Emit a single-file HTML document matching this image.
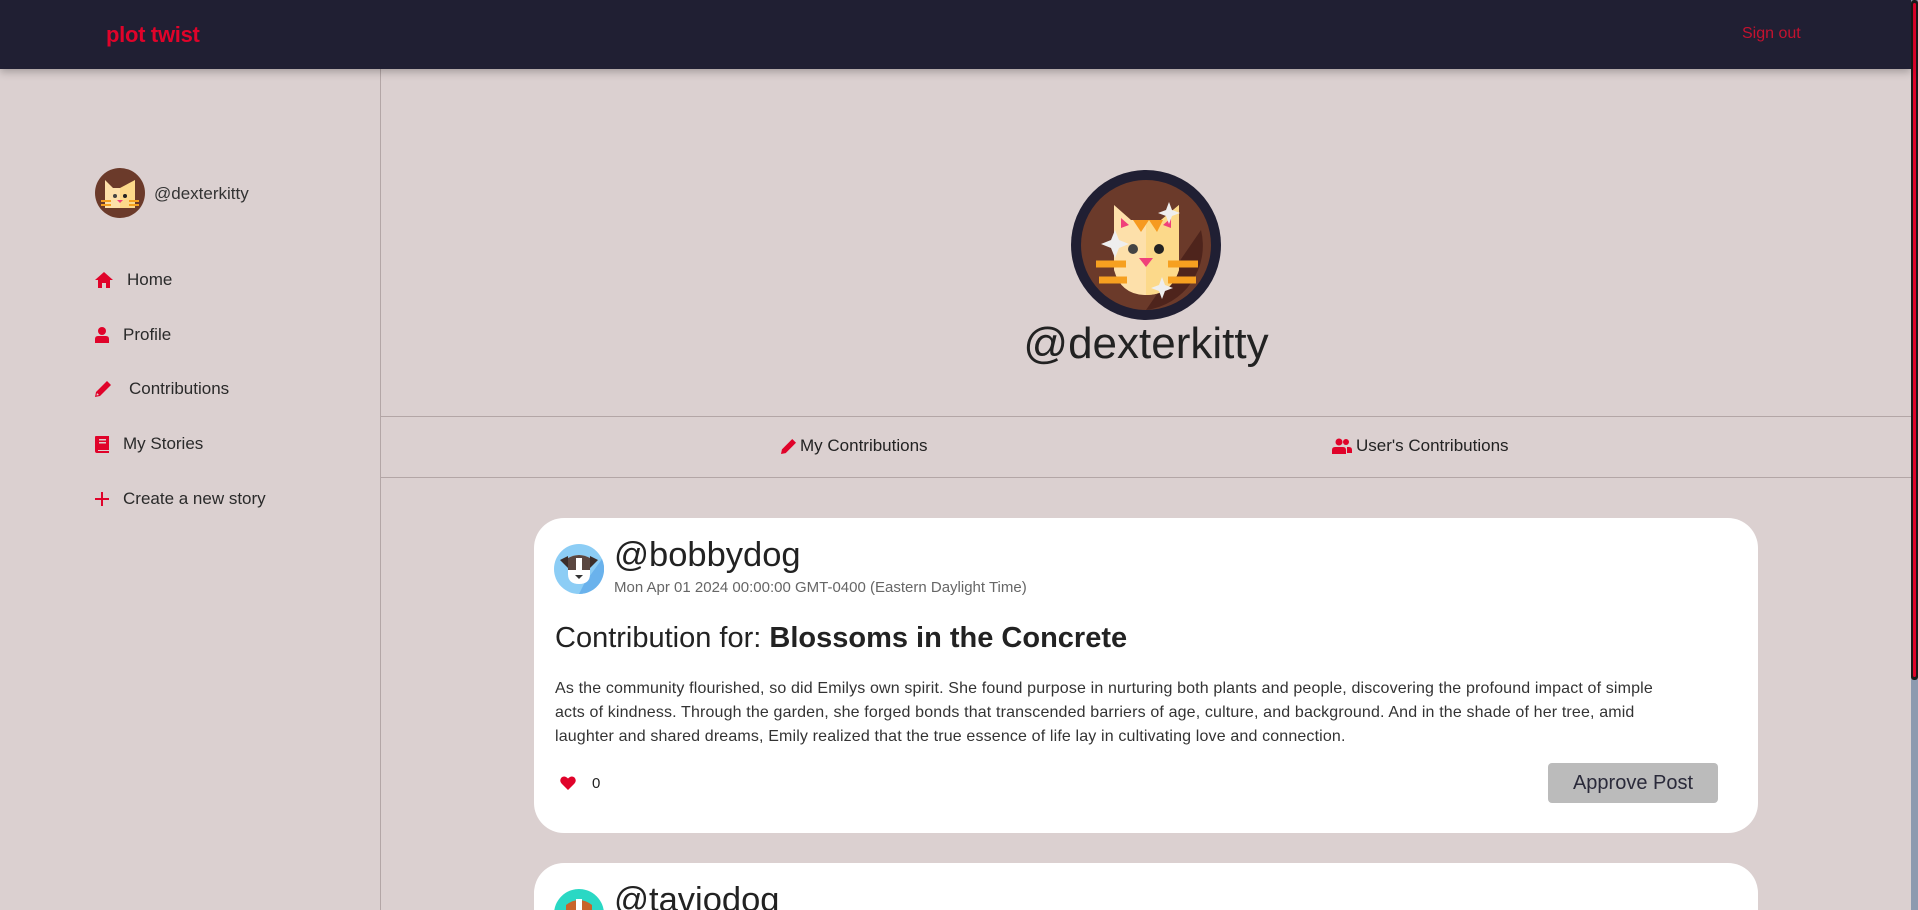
<!DOCTYPE html>
<html style="width:1918px;height:910px;overflow:hidden"><head><meta charset="utf-8"><style>
*{margin:0;padding:0;box-sizing:border-box}
body{width:1918px;height:910px;overflow:hidden;background:#dbd0d0;font-family:"Liberation Sans",sans-serif;color:#222;position:relative}
.hdr{position:absolute;left:0;top:0;width:1911px;height:69px;background:#201f33;box-shadow:0 3px 8px rgba(0,0,0,.25);z-index:2}
.logo{position:absolute;left:106px;top:22px;color:#e0032a;font-weight:bold;font-size:22px;letter-spacing:-0.3px}
.so{position:absolute;left:1742px;top:25px;color:#c4122f;font-size:16px}
.side{position:absolute;left:0;top:69px;width:381px;height:841px;border-right:1px solid #b3a6a6}
.nav{position:absolute;left:95px;font-size:17px;color:#2a2a2a;display:flex;align-items:center}
.nav svg{fill:#e0032a}
.ln{position:absolute;left:381px;width:1530px;height:1px;background:#b3a6a6}
.tab{position:absolute;top:436px;font-size:17px;color:#222;display:flex;align-items:center;gap:4px}
.card{position:absolute;left:534px;width:1224px;background:#fff;border-radius:30px;overflow:hidden}
.sb{position:absolute;left:1911px;top:0;width:7px;height:910px;background:#8e9aaf}
.sbt{position:absolute;left:1911px;top:0;width:7px;height:680px;background:#1a1a1a;border-radius:3px}
.sbt::after{content:"";position:absolute;left:2px;top:3px;width:3px;height:674px;background:#e0032a;border-radius:2px}
</style></head><body>
<div class="hdr"><div class="logo">plot twist</div><div class="so">Sign out</div></div>
<div class="side">
 <svg style="position:absolute;left:95px;top:99px" width="50" height="50" viewBox="0 0 50 50"><circle cx="25" cy="25" r="25" fill="#6b3a2a"/><path d="M10 12 L18 20 L32 20 L40 12 L40 40 L10 40Z" fill="#fde0aa"/><path d="M25 20 L40 12 L40 40 L25 40Z" fill="#fcd98a"/><circle cx="20" cy="28" r="2" fill="#444"/><circle cx="30" cy="28" r="2" fill="#222"/><path d="M22 32 h6 l-3 3z" fill="#f0407a"/><path d="M6 33h10M6 37h10M34 33h10M34 37h10" stroke="#f6a020" stroke-width="2"/></svg>
 <div style="position:absolute;left:154px;top:115px;font-size:17px;color:#333">@dexterkitty</div>
 <div class="nav" style="top:201px"><svg width="18" height="16" viewBox="0 0 18 16"><path d="M9 0 L18 8 H15 V16 H11 V11 H7 V16 H3 V8 H0Z"/></svg><span style="margin-left:14px">Home</span></div>
 <div class="nav" style="top:256px"><svg width="14" height="16" viewBox="0 0 14 16"><circle cx="7" cy="4" r="4"/><path d="M0 16 V12 Q0 9 3 9 H11 Q14 9 14 12 V16Z"/></svg><span style="margin-left:14px">Profile</span></div>
 <div class="nav" style="top:310px"><svg width="16" height="16" viewBox="0 0 16 16"><path d="M12 0 L16 4 L5 15 L0 16 L1 11Z M2 12 L1.5 14.5 L4 14 Z" fill="#e0032a"/></svg><span style="margin-left:18px">Contributions</span></div>
 <div class="nav" style="top:365px"><svg width="14" height="17" viewBox="0 0 14 17"><path d="M1 0 H14 V14 H3 V15 H14 V17 H2 Q0 17 0 15 V1 Q0 0 1 0Z M4 3 H11 V4.5 H4Z M4 6 H11 V7.5 H4Z" fill-rule="evenodd"/></svg><span style="margin-left:14px">My Stories</span></div>
 <div class="nav" style="top:420px"><svg width="14" height="14" viewBox="0 0 14 14"><path d="M6 0h2v14h-2zM0 6h14v2H0z"/></svg><span style="margin-left:14px">Create a new story</span></div>
</div>
<svg style="position:absolute;left:1071px;top:170px" width="150" height="150" viewBox="0 0 150 150"><circle cx="75" cy="75" r="75" fill="#201f33"/><circle cx="75" cy="75" r="65" fill="#6b3a2a"/><path d="M75 140 A65 65 0 0 0 130 60 L75 140Z" fill="#4e241c"/><path d="M43 35 L60 50 L90 50 L108 35 L108 100 Q100 125 75 125 Q50 125 43 100Z" fill="#fde0aa"/><path d="M75 50 L90 50 L108 35 L108 100 Q100 125 75 125Z" fill="#fcd98a"/><path d="M50 48 L58 55 L50 58Z M100 48 L92 55 L100 58Z" fill="#f0407a"/><path d="M62 50 L70 62 L78 50 L86 62 L92 50Z" fill="#f69a20"/><circle cx="62" cy="79" r="5" fill="#444"/><circle cx="88" cy="79" r="5" fill="#222"/><path d="M68 88 h14 l-7 9z" fill="#f0407a"/><path d="M25 94h30M28 110h28M97 94h30M97 110h28" stroke="#f6a020" stroke-width="7"/><path d="M40 70 l4 -10 l4 10 l10 4 l-10 4 l-4 10 l-4 -10 l-10 -4z M95 40 l3 -8 l3 8 l8 3 l-8 3 l-3 8 l-3 -8 l-8 -3z M88 115 l3 -8 l3 8 l8 3 l-8 3 l-3 8 l-3 -8 l-8 -3z" fill="#eee"/></svg>
<div style="position:absolute;left:946px;width:400px;text-align:center;top:319px;font-size:44px;color:#222">@dexterkitty</div>
<div class="ln" style="top:416px"></div>
<div class="ln" style="top:477px"></div>
<div class="tab" style="left:781px"><svg width="15" height="15" viewBox="0 0 16 16"><path d="M12 0 L16 4 L5 15 L0 16 L1 11Z" fill="#e0032a"/></svg>My Contributions</div>
<div class="tab" style="left:1332px"><svg width="20" height="16" viewBox="0 0 20 16"><circle cx="7" cy="4" r="3.5" fill="#e0032a"/><circle cx="14" cy="4" r="3" fill="#e0032a"/><path d="M0 16 V12 Q0 9 3 9 H11 Q14 9 14 12 V16Z M15 9 H17 Q20 9 20 12 V15 H15Z" fill="#e0032a"/></svg>User's Contributions</div>
<div class="card" style="top:518px;height:315px">
 <svg style="position:absolute;left:20px;top:26px" width="50" height="50" viewBox="0 0 50 50"><circle cx="25" cy="25" r="25" fill="#8ccdf5"/><path d="M25 50 A25 25 0 0 0 48 15 L30 40Z" fill="#6ab2ec"/><path d="M14 14 Q25 8 36 14 L36 30 Q36 40 25 40 Q14 40 14 30Z" fill="#fff"/><path d="M14 14 Q25 8 36 14 L36 26 H14Z" fill="#5a4640"/><path d="M6 16 L14 12 L14 24Z M44 16 L36 12 L36 24Z" fill="#3c2e2a"/><path d="M22 14 h6 v12 h-6z" fill="#fff"/><path d="M21 31 h8 l-4 4z" fill="#333"/></svg>
 <div style="position:absolute;left:80px;top:18px;font-size:34.5px;color:#222">@bobbydog</div>
 <div style="position:absolute;left:80px;top:61px;font-size:15px;color:#666">Mon Apr 01 2024 00:00:00 GMT-0400 (Eastern Daylight Time)</div>
 <div style="position:absolute;left:21px;top:104px;font-size:29px;color:#222">Contribution for: <b>Blossoms in the Concrete</b></div>
 <div style="position:absolute;left:21px;top:159px;width:1100px;font-size:16px;letter-spacing:0.15px;line-height:24px;color:#333">As the community flourished, so did Emilys own spirit. She found purpose in nurturing both plants and people, discovering the profound impact of simple acts of kindness. Through the garden, she forged bonds that transcended barriers of age, culture, and background. And in the shade of her tree, amid laughter and shared dreams, Emily realized that the true essence of life lay in cultivating love and connection.</div>
 <svg style="position:absolute;left:26px;top:258px" width="16" height="14" viewBox="0 0 16 14"><path d="M8 14 L1.5 7.5 Q-1 4.5 1.5 1.5 Q4.5 -1 8 2.5 Q11.5 -1 14.5 1.5 Q17 4.5 14.5 7.5Z" fill="#e0032a"/></svg>
 <div style="position:absolute;left:58px;top:257px;font-size:15px">0</div>
 <div style="position:absolute;left:1014px;top:245px;width:170px;height:40px;background:#bbb;border-radius:4px;text-align:center;line-height:40px;font-size:20px;color:#2a2a3a">Approve Post</div>
</div>
<div class="card" style="top:863px;height:47px;border-radius:30px 30px 0 0">
 <svg style="position:absolute;left:20px;top:26px" width="50" height="50" viewBox="0 0 50 50"><circle cx="25" cy="25" r="25" fill="#2ad8c4"/><path d="M12 16 Q25 6 38 16 L38 40 H12Z" fill="#c8642a"/><path d="M22 10 h6 v30 h-6z" fill="#fff"/></svg>
 <div style="position:absolute;left:80px;top:18px;font-size:34.5px;color:#222">@taviodog</div>
</div>
<div class="sb"></div><div class="sbt"></div>
</body></html>
